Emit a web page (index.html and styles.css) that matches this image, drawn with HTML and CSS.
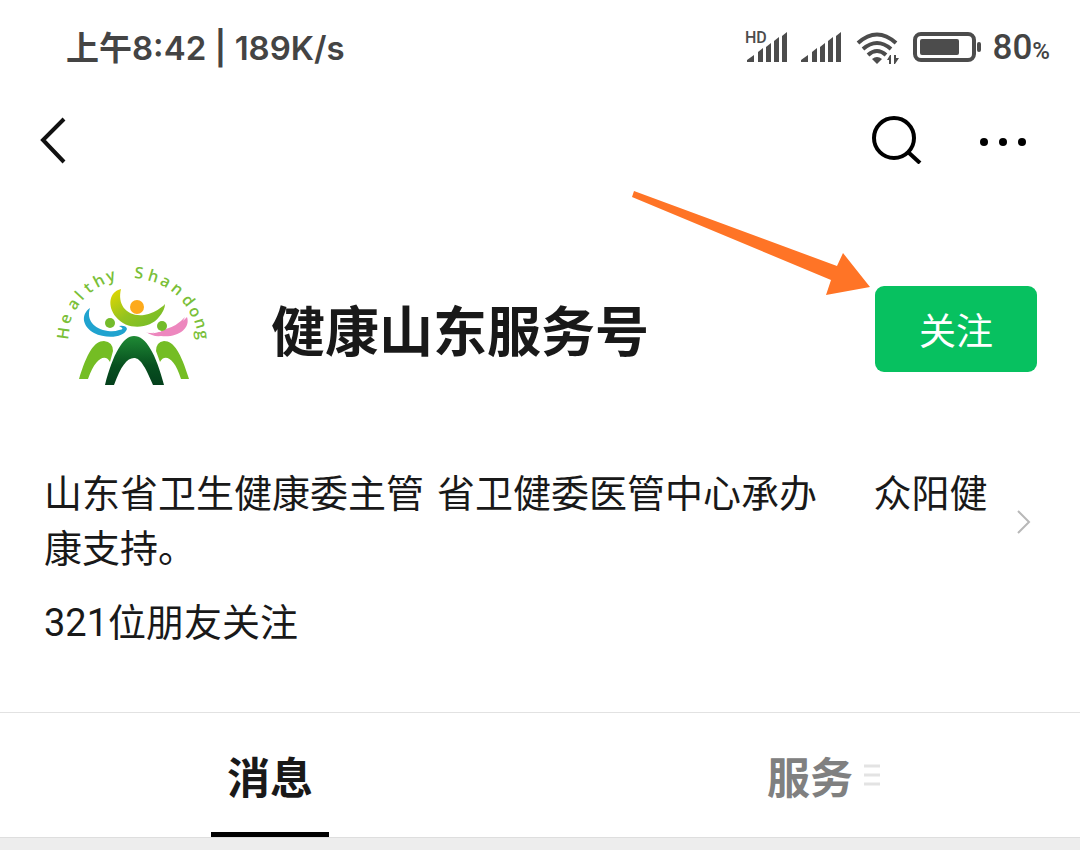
FILE: index.html
```html
<!DOCTYPE html>
<html lang="zh-CN">
<head>
    <meta charset="UTF-8">
    <meta name="viewport" content="width=device-width, initial-scale=1.0">
    <title>健康山东服务号</title>
    <link rel="stylesheet" href="styles.css">
</head>
<body>
    <div class="status-bar">
        <div class="status-time">上午8:42 | 189K/s</div>
        <div class="status-icons">
            <svg class="signal-hd" width="48" height="40" viewBox="-6 -3 48 40">
                <text class="hd-label" x="-1" y="13">HD</text>
                <path d="M1 32v-2l7-5v7zM12 32V22l5-4v14zM20 32V17l5-4v19zM28 32V11l5-4v25zM36 32V6l5-4v30z"/>
            </svg>
            <svg class="signal" width="44" height="34" viewBox="0 0 44 34">
                <path d="M1 32v-2l7-5v7zM12 32V22l5-4v14zM20 32V17l5-4v19zM28 32V11l5-4v25zM36 32V6l5-4v30z"/>
            </svg>
            <svg class="wifi" width="44" height="34" viewBox="0 0 44 34">
                <g fill="none" stroke="#4c4c4c" stroke-width="4">
                    <path d="M2 13Q21 -4 40 13"/>
                    <path d="M7 19Q21 7 35 19"/>
                    <path d="M12 25Q21 17 30 25"/>
                </g>
                <path d="M16 29q5-4 10 0l-5 5z"/>
                <path d="M35 25v9h-2v-4h-2l3-5zM38 25v9h1l4-6h-3v-3z"/>
            </svg>
            <svg class="battery" width="69" height="34" viewBox="0 0 69 34">
                <rect x="3" y="4" width="59" height="26" rx="6" fill="none" stroke="#4c4c4c" stroke-width="4"/>
                <rect x="8" y="9" width="39" height="16" rx="2"/>
                <rect x="65" y="12" width="4" height="10" rx="2"/>
            </svg>
            <span class="battery-text">80<small>%</small></span>
        </div>
    </div>

    <header class="nav-bar">
        <button type="button" class="icon-button" aria-label="返回">
            <svg width="30" height="50" viewBox="0 0 30 50">
                <path d="M26 5L5 26L26 48" fill="none" stroke="#111" stroke-width="4"/>
            </svg>
        </button>
        <div class="nav-actions">
            <button type="button" class="icon-button" aria-label="搜索">
                <svg width="52" height="50" viewBox="0 0 52 50">
                    <circle cx="24" cy="24" r="20" fill="none" stroke="#000" stroke-width="4"/>
                    <path d="M38 38L50 49" stroke="#000" stroke-width="4"/>
                </svg>
            </button>
            <button type="button" class="icon-button" aria-label="更多">
                <svg width="50" height="50" viewBox="0 0 50 50">
                    <circle cx="6" cy="28" r="4"/>
                    <circle cx="25" cy="28" r="4"/>
                    <circle cx="44" cy="28" r="4"/>
                </svg>
            </button>
        </div>
    </header>

    <main>
        <section class="profile">
            <svg class="logo" width="190" height="158" viewBox="0 0 190 158" role="img" aria-label="Healthy Shandong">
                <defs>
                    <linearGradient id="darkGreen" x1="0" y1="0" x2="0" y2="1">
                        <stop offset="0" stop-color="#1f8a35"/>
                        <stop offset="0.6" stop-color="#07501f"/>
                        <stop offset="1" stop-color="#04401c"/>
                    </linearGradient>
                    <linearGradient id="lime" x1="0" y1="0" x2="1" y2="1">
                        <stop offset="0" stop-color="#e6d800"/>
                        <stop offset="0.5" stop-color="#94c31f"/>
                        <stop offset="1" stop-color="#6dbb2c"/>
                    </linearGradient>
                </defs>
                <text class="logo-text"
                    x="28 29 35 42 49 57 68 85 94 107 119 130 141 148 154 157"
                    y="90 75 61 51 44 38 32 28 28 30 34 40 50 60 70 81"
                    rotate="-82 -69 -56 -47 -38 -28 -17 -5 6 17 28 39 52 62 73 83">Healthy Shandong</text>
                <path d="M81 39C69 42 67 56 76 67C87 81 110 79 119 67Q125 60 125 54Q119 61 113 64Q121 60 123 56Q113 64 104 65C87 67 77 55 81 39z" fill="url(#lime)"/>
                <circle cx="97" cy="57" r="7" fill="#fdaa1c"/>
                <path d="M50 58C40 65 43 77 54 83C66 89 84 88 87 79Q86 75 79 76Q86 79 79 80Q74 82 68 81C54 79 46 70 50 58z" fill="#20a3cf"/>
                <circle cx="70" cy="73" r="5" fill="#74bb2b"/>
                <path d="M145 67Q137 76 126 79Q118 84 106 82Q113 87 121 86C137 88 151 79 147 67L143 71z" fill="#ed87be"/>
                <path d="M105 82Q114 84 121 81" fill="none" stroke="#fff" stroke-width="1"/>
                <circle cx="122" cy="76" r="5" fill="#74bb2b"/>
                <path d="M39 129C47 103 54 91 64 91Q73 92 73 101L70 112C66 104 56 106 48 129z" fill="#74bd24"/>
                <path d="M149 129C141 103 134 91 124 91Q116 92 116 101L120 112C124 104 134 106 141 129z" fill="#74bd24"/>
                <path d="M65 135C73 104 83 86 94 86C106 86 116 104 124 135H113C105 116 100 108 94 108C87 108 81 116 74 135z" fill="url(#darkGreen)"/>
            </svg>
            <h1>健康山东服务号</h1>
            <div class="follow">
                <button type="button" class="follow-button">关注</button>
                <svg class="arrow" width="240" height="106" viewBox="0 0 240 106" aria-hidden="true">
                    <path d="M3 1L1 7L200 90L195 105L239 97L212 63L206 76z" fill="#ff7426"/>
                </svg>
            </div>
        </section>

        <section class="details">
            <a href="#" class="description">
                <span>山东省卫生健康委主管&emsp13;省卫健委医管中心承办&nbsp;&nbsp;&nbsp;&nbsp;&nbsp; 众阳健康支持。</span>
                <svg width="16" height="26" viewBox="0 0 16 26">
                    <path d="M2 2L13 13L2 24" fill="none" stroke="#b8b8b8" stroke-width="2"/>
                </svg>
            </a>
            <p class="friends">321位朋友关注</p>
        </section>

        <nav class="tabs">
            <button type="button" class="tab active">消息</button>
            <button type="button" class="tab">
                <span class="tab-label">服务
                    <svg class="menu-icon" width="16" height="22" viewBox="0 0 16 22">
                        <path d="M0 2H16M0 11H16M0 20H16" stroke="#e3e3e3" stroke-width="3"/>
                    </svg>
                </span>
            </button>
        </nav>
    </main>
</body>
</html>
```
FILE: styles.css
```css
* {
    box-sizing: border-box;
}
body {
    margin: 0;
    min-height: 100vh;
    background-color: #ededed;
    color: #191919;
    font-family: Roboto, "Noto Sans CJK SC", sans-serif;
}
button {
    padding: 0;
    border: none;
    background: none;
    color: inherit;
    font-family: inherit;
    cursor: pointer;
}
svg {
    display: block;
    flex-shrink: 0;
}
.status-bar {
    display: flex;
    justify-content: space-between;
    align-items: center;
    height: 94px;
    padding: 0 30px 0 66px;
    background-color: #fff;
    color: #444;
}
.status-time {
    padding-bottom: 2px;
    font-family: Inter, "Noto Sans CJK SC", sans-serif;
    font-size: 33px;
    font-weight: 600;
}
.status-icons {
    display: flex;
    align-items: center;
    gap: 12px;
    fill: #4c4c4c;
}
.hd-label {
    font-size: 16px;
    font-weight: 500;
}
.battery-text {
    font-size: 35px;
    font-weight: 500;
}
.battery-text small {
    font-size: 24px;
}
.nav-bar {
    display: flex;
    justify-content: space-between;
    align-items: center;
    height: 90px;
    padding: 0 52px 0 38px;
    background-color: #fff;
}
.nav-actions {
    display: flex;
    gap: 56px;
}
.profile {
    display: flex;
    align-items: center;
    height: 283px;
    padding: 7px 43px 0 40px;
    background-color: #fff;
}
h1 {
    flex: 1;
    margin: 0 0 0 41px;
    padding-top: 10px;
    font-size: 54px;
    font-weight: 700;
    line-height: 72px;
}
.follow {
    position: relative;
}
.follow-button {
    display: block;
    width: 162px;
    height: 86px;
    border-radius: 9px;
    background-color: #07c160;
    color: #fff;
    font-size: 37px;
}
/* points at the follow button from outside it */
.arrow {
    position: absolute;
    top: -96px;
    right: 166px;
    pointer-events: none;
}
.details {
    padding: 0 48px 61px 44px;
    background-color: #fff;
    font-size: 38px;
}
.description {
    display: flex;
    justify-content: space-between;
    align-items: center;
    gap: 24px;
    color: inherit;
    line-height: 55px;
    text-decoration: none;
}
.friends {
    margin: 19px 0 0;
    line-height: 55px;
}
.tabs {
    display: grid;
    grid-template-columns: 1fr 1fr;
    border-top: 1px solid #e2e2e2;
    border-bottom: 1px solid #dedede;
    background-color: #fff;
}
.tab {
    position: relative;
    height: 124px;
    color: #808080;
    font-size: 43px;
    font-weight: 700;
}
.tab.active {
    color: #191919;
}
.tab.active::after {
    content: "";
    position: absolute;
    bottom: 0;
    left: calc(50% - 59px);
    width: 118px;
    height: 5px;
    background-color: #000;
}
.tab-label {
    position: relative;
}
.menu-icon {
    position: absolute;
    top: 10px;
    left: calc(100% + 11px);
}
.logo-text {
    fill: #7abf38;
    font-family: "Open Sans", sans-serif;
    font-size: 16px;
    font-weight: 600;
}
```
